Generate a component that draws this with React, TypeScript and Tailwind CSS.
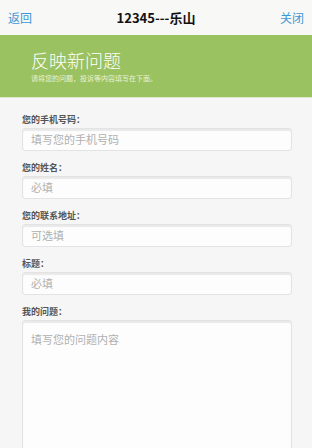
const font = { fontFamily: '"Noto Sans CJK SC", "Liberation Sans", sans-serif' };

function Field({ label, placeholder }: { label: string; placeholder: string }) {
  return (
    <div className="flex flex-col">
      <div className="text-[9px] leading-[12px] font-bold text-[#555] h-[12px] mb-[2px]">{label}</div>
      <div className="h-[23px] rounded-[3px] border border-[#e3e3e3] bg-[#fdfdfd] shadow-[inset_0_2px_1px_rgba(0,0,0,0.08)] flex items-center px-[8px]">
        <span className="text-[11px] text-[#b0b0b0]">{placeholder}</span>
      </div>
    </div>
  );
}

export default function App() {
  return (
    <div className="w-[312px] h-[448px] overflow-hidden bg-[#f6f6f6] flex flex-col" style={font}>
      <div className="h-[35px] bg-[#f8f8f6] flex items-center justify-between px-[8px] shrink-0">
        <span className="text-[12px] text-[#3d97d4]">返回</span>
        <span className="text-[13px] font-bold text-[#111]">12345---乐山</span>
        <span className="text-[12px] text-[#3d97d4]">关闭</span>
      </div>
      <div className="h-[63px] bg-[#9bc260] border-b border-[#dfe8cf] shrink-0 flex flex-col pl-[31px] pt-[12px]">
        <div className="text-[18px] leading-[26px] font-light text-white">反映新问题</div>
        <div className="text-[7px] leading-[10px] text-[#e9f2da]">请将您的问题，投诉等内容填写在下面。</div>
      </div>
      <div className="flex flex-col gap-[11px] pt-[16px] pl-[22px] pr-[20px]">
        <Field label="您的手机号码：" placeholder="填写您的手机号码" />
        <Field label="您的姓名：" placeholder="必填" />
        <Field label="您的联系地址：" placeholder="可选填" />
        <Field label="标题：" placeholder="必填" />
        <div className="flex flex-col">
          <div className="text-[9px] leading-[12px] font-bold text-[#555] h-[12px] mb-[2px]">我的问题：</div>
          <div className="h-[160px] rounded-[3px] border border-[#e3e3e3] bg-[#fdfdfd] shadow-[inset_0_2px_1px_rgba(0,0,0,0.08)] px-[8px] pt-[4px]">
            <span className="text-[11px] text-[#b0b0b0]">填写您的问题内容</span>
          </div>
        </div>
      </div>
    </div>
  );
}
